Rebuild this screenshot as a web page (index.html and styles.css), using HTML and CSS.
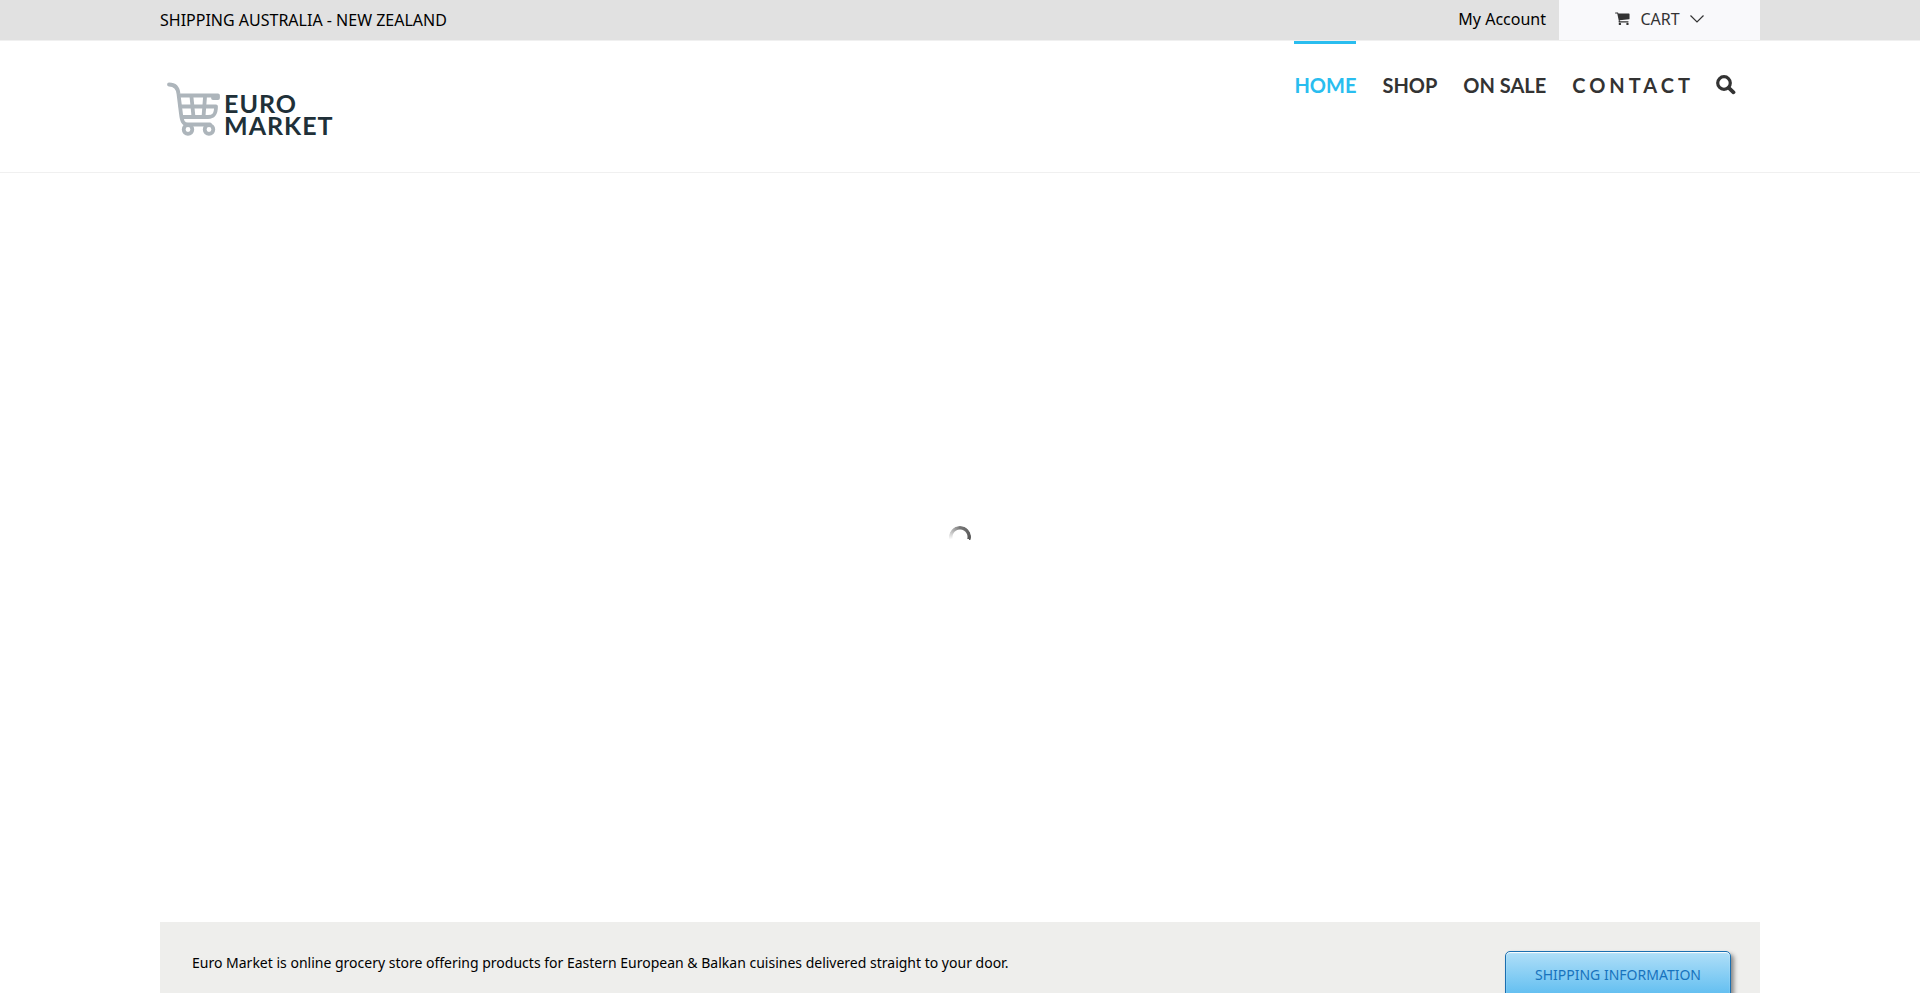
FILE: index.html
```html
<!DOCTYPE html>
<html lang="en">
<head>
<meta charset="utf-8">
<meta name="viewport" content="width=device-width, initial-scale=1">
<title>Euro Market</title>
<link rel="stylesheet" href="styles.css">
</head>
<body>
<div class="topbar">
  <div class="container topbar-inner">
    <p class="topbar-note">SHIPPING AUSTRALIA - NEW ZEALAND</p>
    <div class="topbar-links">
      <a class="account" href="#">My Account</a>
      <a class="cart" href="#">
        <svg class="cart-icon" viewBox="0 0 16 14" aria-hidden="true"><path fill="currentColor" d="M0 .6C0 .2.2 0 .6 0h2.200c.7 0 .7.7.8 1.200H14.900c.4 0 .6.3.6.6v4.800c0 .3-.2.600-.500.600L5 8.300l.2 1.100h8.700c.8 0 .8 1.200 0 1.200H4.300c-.9 0-.6-.8-.2-1.600L2.400 1.200H.6C.2 1.200 0 .9 0 .6z"/><circle cx="5.200" cy="12.200" r="1.300" fill="currentColor"/><circle cx="13.300" cy="12.200" r="1.300" fill="currentColor"/></svg>
        <span>CART</span>
        <svg class="chevron" viewBox="0 0 14 8" aria-hidden="true"><path d="M.5.5 7 7 13.500.5" fill="none" stroke="currentColor" stroke-width="1.200"/></svg>
      </a>
    </div>
  </div>
</div>
<header class="header">
  <div class="container header-inner">
    <a class="logo" href="#" aria-label="Euro Market">
      <svg class="logo-cart" viewBox="0 0 54 54" aria-hidden="true">
        <g fill="none" stroke="#adb5bb" stroke-width="3.800" stroke-linecap="round" stroke-linejoin="round">
          <path d="M2 2.500C8 2.500 11 6 11.500 12L14 32C14.800 39 16 42.500 21 42.500H43"/>
          <path d="M12 13.500H51V16H46"/>
          <path d="M13.500 24.500H49M49 24.500C49 32 47 35 41 35H15"/>
          <path d="M24.500 15 26.500 35M38 15 36.500 35"/>
          <circle cx="21" cy="47.500" r="4.300"/><circle cx="42" cy="47.500" r="4.300"/>
        </g>
      </svg>
      <span class="logo-text"><span>EURO</span><span>MARKET</span></span>
    </a>
    <nav class="nav" aria-label="Main">
      <a class="nav-link is-active" href="#">HOME</a>
      <a class="nav-link" href="#">SHOP</a>
      <a class="nav-link" href="#">ON SALE</a>
      <a class="nav-link is-spaced" href="#">CONTACT</a>
      <button class="search" type="button" aria-label="Search">
        <svg class="search-icon" viewBox="0 0 20 20" aria-hidden="true"><circle cx="8" cy="8" r="6.300" fill="none" stroke="currentColor" stroke-width="3.200"/><path d="M12.800 12.800 17.500 17.300" stroke="currentColor" stroke-width="3.800" stroke-linecap="round"/></svg>
      </button>
    </nav>
  </div>
</header>
<main>
  <section class="slider" aria-label="Featured">
    <div class="spinner" role="status" aria-label="Loading"></div>
  </section>
  <section class="container intro">
    <p class="intro-text">Euro Market is online grocery store offering products for Eastern European &amp; Balkan cuisines delivered straight to your door.</p>
    <a class="intro-button" href="#">SHIPPING INFORMATION</a>
  </section>
</main>
</body>
</html>
```

FILE: styles.css
```css
* { box-sizing: border-box; }

html { overflow: hidden; }

body {
  margin: 0;
  background: #fff;
  color: #000;
  font-family: "Noto Sans", "Open Sans", sans-serif;
  font-size: 16px;
  height: 100vh;
  overflow: hidden;
}

p { margin: 0; }
a { color: inherit; text-decoration: none; }
svg { display: block; flex: none; }

.container {
  width: 100%;
  max-width: 1600px;
  margin: 0 auto;
}

.topbar {
  background: #e1e1e1;
  border-bottom: 1px solid #f0f0f0;
}

.topbar-inner {
  display: flex;
  justify-content: space-between;
  line-height: 40px;
}

.topbar-links { display: flex; line-height: 38px; }
.account { padding-right: 13px; }

.cart {
  display: flex;
  align-items: center;
  justify-content: center;
  gap: 10px;
  width: 201px;
  height: 40px;
  padding-bottom: 2px;
  background: #f9f9fb;
  color: #333;
}

.cart-icon { width: 15px; height: 14px; }
.chevron { width: 14px; height: 8px; }

.header { border-bottom: 1px solid #f0f0f0; }

.header-inner {
  display: flex;
  justify-content: space-between;
  align-items: flex-start;
  min-height: 131px;
}

.logo {
  display: flex;
  gap: 3px;
  padding: 41px 0 0 7px;
}

.logo-cart { width: 54px; height: 54px; }

.logo-text {
  display: flex;
  flex-direction: column;
  padding-top: 10px;
  color: #203038;
  font: bold 25px/22px Lato, sans-serif;
  letter-spacing: 1px;
}

.nav {
  display: flex;
  gap: 26px;
  padding-right: 24px;
  color: #333;
  font: bold 20px/82px Lato, sans-serif;
}

.nav-link { border-top: 3px solid transparent; }
.is-active { color: #29bdef; border-color: #29bdef; }
.is-spaced { letter-spacing: 4px; margin-right: -4px; }

.search {
  display: flex;
  align-items: center;
  height: 88px;
  padding: 0;
  border: 0;
  background: none;
  color: #333;
}

.search-icon { width: 20px; height: 20px; }

.slider {
  display: flex;
  align-items: center;
  justify-content: center;
  height: 749px;
  padding-bottom: 22px;
}

.spinner {
  width: 22px;
  height: 22px;
  border-radius: 50%;
  background: conic-gradient(#777, #555 105deg, transparent 105deg 255deg, #fff 255deg, #777 360deg);
  mask: radial-gradient(circle, transparent 7px, #000 8px);
}

.intro {
  display: flex;
  justify-content: space-between;
  align-items: flex-start;
  padding: 29px 29px 32px 32px;
  background: #eeeeec;
}

.intro-text {
  font-size: 14px;
  line-height: 24px;
}

.intro-button {
  padding: 0 29px;
  border: 1px solid #1a6fb0;
  border-radius: 5px;
  background: linear-gradient(#b0dff8, #5cbcf0);
  box-shadow: inset 0 1px 1px #fff, 3px 3px 4px #888;
  color: #1873bd;
  font-size: 14px;
  line-height: 46px;
}
```
